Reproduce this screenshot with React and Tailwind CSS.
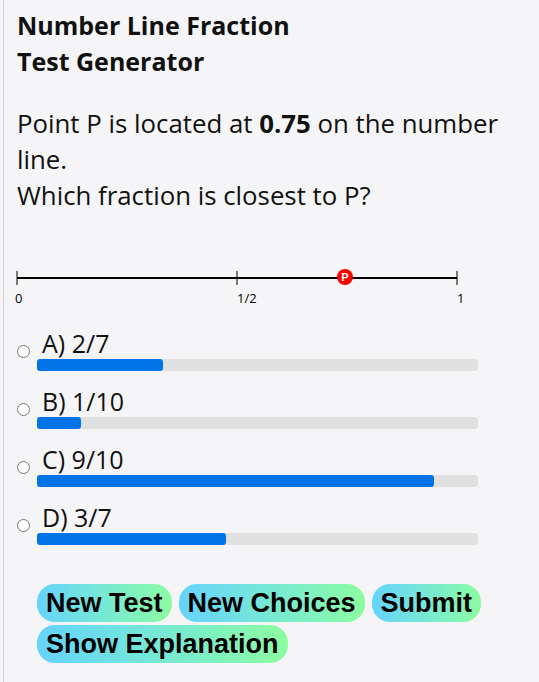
import React from "react";

const choices = [
  { label: "A) 2/7", value: 2 / 7 },
  { label: "B) 1/10", value: 1 / 10 },
  { label: "C) 9/10", value: 9 / 10 },
  { label: "D) 3/7", value: 3 / 7 },
];

const NumberLine = () => (
  <svg width="480" height="50" className="block">
    <line x1="17" y1="17" x2="457" y2="17" stroke="#000" strokeWidth="2" />
    <line x1="17" y1="10" x2="17" y2="24" stroke="#000" strokeWidth="1" />
    <line x1="237" y1="10" x2="237" y2="24" stroke="#000" strokeWidth="1" />
    <line x1="457" y1="10" x2="457" y2="24" stroke="#000" strokeWidth="1" />
    <text x="15" y="42" fontSize="13" fontFamily="Open Sans, sans-serif">0</text>
    <text x="237" y="42" fontSize="13" fontFamily="Open Sans, sans-serif">1/2</text>
    <text x="457" y="42" fontSize="13" fontFamily="Open Sans, sans-serif">1</text>
    <circle cx="345" cy="16" r="8" fill="#f00" />
    <text x="345" y="20" fontSize="11" fontWeight="bold" fill="#fff" textAnchor="middle" fontFamily="Liberation Sans, sans-serif">P</text>
  </svg>
);

export default function App() {
  return (
    <div className="min-h-screen bg-[#f5f5f7]">
      <div className="ml-[3px] min-h-screen border-l border-[#d0d0d0] pl-[13px] pt-[7px] font-['Open_Sans',sans-serif] text-[#111]">
        <h1 className="w-[300px] text-[25px] font-bold leading-[36px]">
          Number Line Fraction Test Generator
        </h1>
        <p className="mt-[26px] w-[505px] text-[25.8px] leading-[36px]">
          Point P is located at <b>0.75</b> on the number line.
          <br />
          Which fraction is closest to P?
        </p>
        <div className="mt-[48px] -ml-[17px]">
          <NumberLine />
        </div>
        <div className="mt-[16px] flex flex-col gap-[14px]">
          {choices.map((c) => (
            <div key={c.label} className="flex flex-col">
              <label className="flex items-end gap-[12px] text-[25px] leading-[32px]">
                <input type="radio" name="choice" className="mb-[1px] h-[13px] w-[13px]" />
                <span>{c.label}</span>
              </label>
              <div className="ml-[20px] h-[12px] w-[441px] rounded-[3px] bg-[#e0e0e0]">
                <div
                  className="h-full rounded-[3px] bg-[#0073e6]"
                  style={{ width: `${c.value * 100}%` }}
                />
              </div>
            </div>
          ))}
        </div>
        <div className="ml-[20px] mt-[39px] flex w-[460px] flex-wrap gap-x-[7px] gap-y-[3px] font-['Liberation_Sans',sans-serif]">
          {["New Test", "New Choices", "Submit", "Show Explanation"].map((b) => (
            <button
              key={b}
              className="h-[38px] rounded-[18px] bg-gradient-to-r from-[#66d3fc] to-[#8cfca0] px-[9px] text-[27px] font-bold leading-[38px] text-black"
            >
              {b}
            </button>
          ))}
        </div>
      </div>
    </div>
  );
}
